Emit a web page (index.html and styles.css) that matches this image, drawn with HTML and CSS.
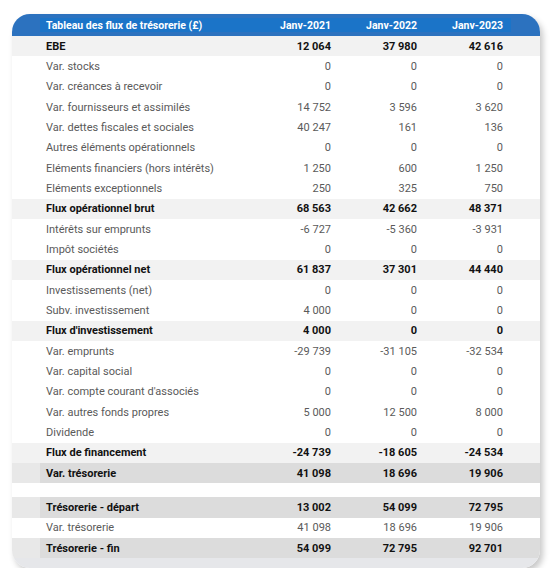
FILE: index.html
```html
<!DOCTYPE html>
<html lang="fr">

<head>
    <meta charset="UTF-8">
    <meta name="viewport" content="width=device-width, initial-scale=1.0">
    <title>Tableau des flux de trésorerie</title>
    <link rel="stylesheet" href="styles.css">
</head>

<body>
    <div class="card">
        <div class="head">
            <div class="row head-row">
                <span>Tableau des flux de trésorerie (£)</span>
                <span class="num">Janv-2021</span>
                <span class="num">Janv-2022</span>
                <span class="num">Janv-2023</span>
            </div>
        </div>

        <div class="row sub"><span>EBE</span><span class="num">12&nbsp;064</span><span class="num">37&nbsp;980</span><span class="num">42&nbsp;616</span></div>
        <div class="row"><span>Var. stocks</span><span class="num">0</span><span class="num">0</span><span class="num">0</span></div>
        <div class="row"><span>Var. créances à recevoir</span><span class="num">0</span><span class="num">0</span><span class="num">0</span></div>
        <div class="row"><span>Var. fournisseurs et assimilés</span><span class="num">14&nbsp;752</span><span class="num">3&nbsp;596</span><span class="num">3&nbsp;620</span></div>
        <div class="row"><span>Var. dettes fiscales et sociales</span><span class="num">40&nbsp;247</span><span class="num">161</span><span class="num">136</span></div>
        <div class="row"><span>Autres éléments opérationnels</span><span class="num">0</span><span class="num">0</span><span class="num">0</span></div>
        <div class="row"><span>Eléments financiers (hors intérêts)</span><span class="num">1&nbsp;250</span><span class="num">600</span><span class="num">1&nbsp;250</span></div>
        <div class="row"><span>Eléments exceptionnels</span><span class="num">250</span><span class="num">325</span><span class="num">750</span></div>
        <div class="row sub"><span>Flux opérationnel brut</span><span class="num">68&nbsp;563</span><span class="num">42&nbsp;662</span><span class="num">48&nbsp;371</span></div>
        <div class="row"><span>Intérêts sur emprunts</span><span class="num">-6&nbsp;727</span><span class="num">-5&nbsp;360</span><span class="num">-3&nbsp;931</span></div>
        <div class="row"><span>Impôt sociétés</span><span class="num">0</span><span class="num">0</span><span class="num">0</span></div>
        <div class="row sub"><span>Flux opérationnel net</span><span class="num">61&nbsp;837</span><span class="num">37&nbsp;301</span><span class="num">44&nbsp;440</span></div>
        <div class="row"><span>Investissements (net)</span><span class="num">0</span><span class="num">0</span><span class="num">0</span></div>
        <div class="row"><span>Subv. investissement</span><span class="num">4&nbsp;000</span><span class="num">0</span><span class="num">0</span></div>
        <div class="row sub"><span>Flux d'investissement</span><span class="num">4&nbsp;000</span><span class="num">0</span><span class="num">0</span></div>
        <div class="row"><span>Var. emprunts</span><span class="num">-29&nbsp;739</span><span class="num">-31&nbsp;105</span><span class="num">-32&nbsp;534</span></div>
        <div class="row"><span>Var. capital social</span><span class="num">0</span><span class="num">0</span><span class="num">0</span></div>
        <div class="row"><span>Var. compte courant d'associés</span><span class="num">0</span><span class="num">0</span><span class="num">0</span></div>
        <div class="row"><span>Var. autres fonds propres</span><span class="num">5&nbsp;000</span><span class="num">12&nbsp;500</span><span class="num">8&nbsp;000</span></div>
        <div class="row"><span>Dividende</span><span class="num">0</span><span class="num">0</span><span class="num">0</span></div>
        <div class="row sub"><span>Flux de financement</span><span class="num">-24&nbsp;739</span><span class="num">-18&nbsp;605</span><span class="num">-24&nbsp;534</span></div>
        <div class="row total"><span>Var. trésorerie</span><span class="num">41&nbsp;098</span><span class="num">18&nbsp;696</span><span class="num">19&nbsp;906</span></div>

        <div class="spacer"></div>

        <div class="row total"><span>Trésorerie - départ</span><span class="num">13&nbsp;002</span><span class="num">54&nbsp;099</span><span class="num">72&nbsp;795</span></div>
        <div class="row"><span>Var. trésorerie</span><span class="num">41&nbsp;098</span><span class="num">18&nbsp;696</span><span class="num">19&nbsp;906</span></div>
        <div class="row total"><span>Trésorerie - fin</span><span class="num">54&nbsp;099</span><span class="num">72&nbsp;795</span><span class="num">92&nbsp;701</span></div>

        <div class="foot"></div>
    </div>
</body>

</html>
```

FILE: styles.css
```css
body {
    margin: 0;
    background-color: white;
    font-family: Roboto, "Liberation Sans", Arial, sans-serif;
    font-size: 11px;
    color: #5a5a5a;
}

.card {
    margin: 14px 0 0 12px;
    width: 528px;
    border-radius: 18px;
    overflow: hidden;
    background: white;
    box-shadow: 3px 4px 6px rgba(0, 0, 0, 0.22);
}

.row {
    display: grid;
    grid-template-columns: 213px 86px 86px 86px;
    align-items: center;
    height: 20.33px;
    padding: 0 29px 0 28px;
}

.row span:first-child {
    padding-left: 6px;
}

.num {
    text-align: right;
    padding-right: 8px;
}

.head {
    background-color: #2c72bf;
    padding: 4px 0;
}

.head-row {
    height: 14px;
    padding: 0;
    margin: 0 29px 0 28px;
    background-color: #1b74c8;
    color: white;
    font-weight: bold;
    font-size: 10.5px;
}

.sub {
    background-color: #f2f2f2;
    color: #111;
    font-weight: bold;
}

.total {
    background: linear-gradient(to right, #e8e8e8 28px, #dcdcdc 28px);
    color: #111;
    font-weight: bold;
}

.spacer {
    height: 14px;
}

.foot {
    height: 10px;
    background-color: #e6e7ea;
}
```
